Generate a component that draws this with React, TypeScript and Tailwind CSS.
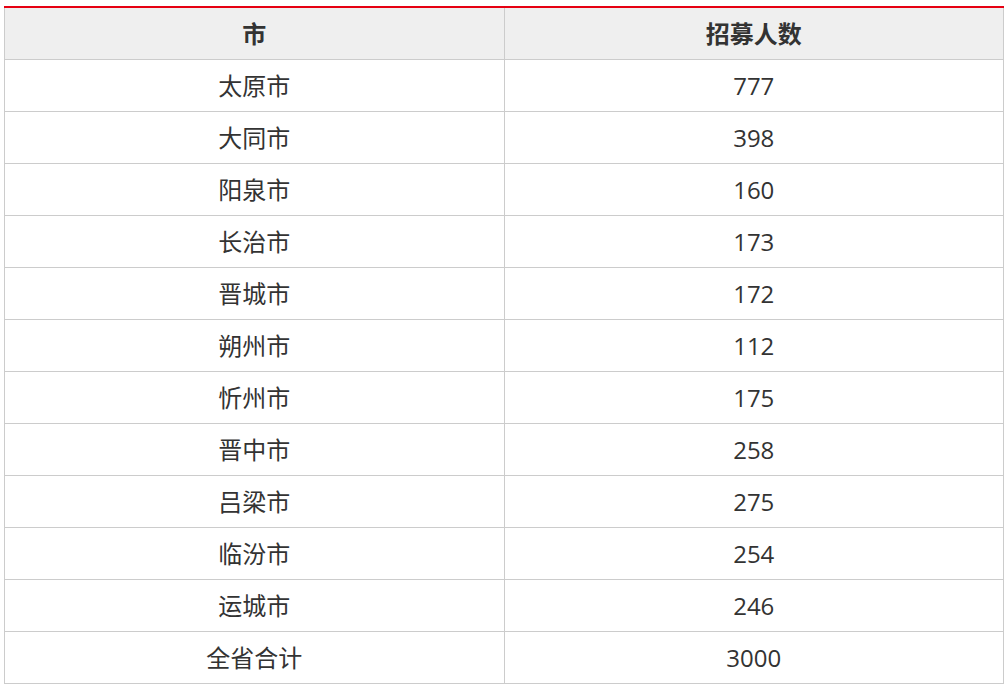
import React from 'react';

const rows: [string, string][] = [
  ['太原市', '777'],
  ['大同市', '398'],
  ['阳泉市', '160'],
  ['长治市', '173'],
  ['晋城市', '172'],
  ['朔州市', '112'],
  ['忻州市', '175'],
  ['晋中市', '258'],
  ['吕梁市', '275'],
  ['临汾市', '254'],
  ['运城市', '246'],
  ['全省合计', '3000'],
];

export default function App() {
  return (
    <div className="min-h-screen bg-white pt-[6px] pl-[4px] font-['Open_Sans','Noto_Sans_CJK_SC',sans-serif] text-[#333]">
      <table className="w-[1000px] table-fixed border-collapse border-t-2 border-t-[#e60012] text-[24px]">
        <thead>
          <tr className="h-[52px] bg-[#efefef]">
            <th className="border border-[#cccccc] border-t-0 pt-[2px] font-bold">市</th>
            <th className="border border-[#cccccc] border-t-0 pt-[2px] font-bold">招募人数</th>
          </tr>
        </thead>
        <tbody>
          {rows.map(([city, count]) => (
            <tr key={city} className="h-[52px]">
              <td className="border border-[#cccccc] pt-[2px] text-center">{city}</td>
              <td className="border border-[#cccccc] pt-[2px] text-center">{count}</td>
            </tr>
          ))}
        </tbody>
      </table>
    </div>
  );
}
